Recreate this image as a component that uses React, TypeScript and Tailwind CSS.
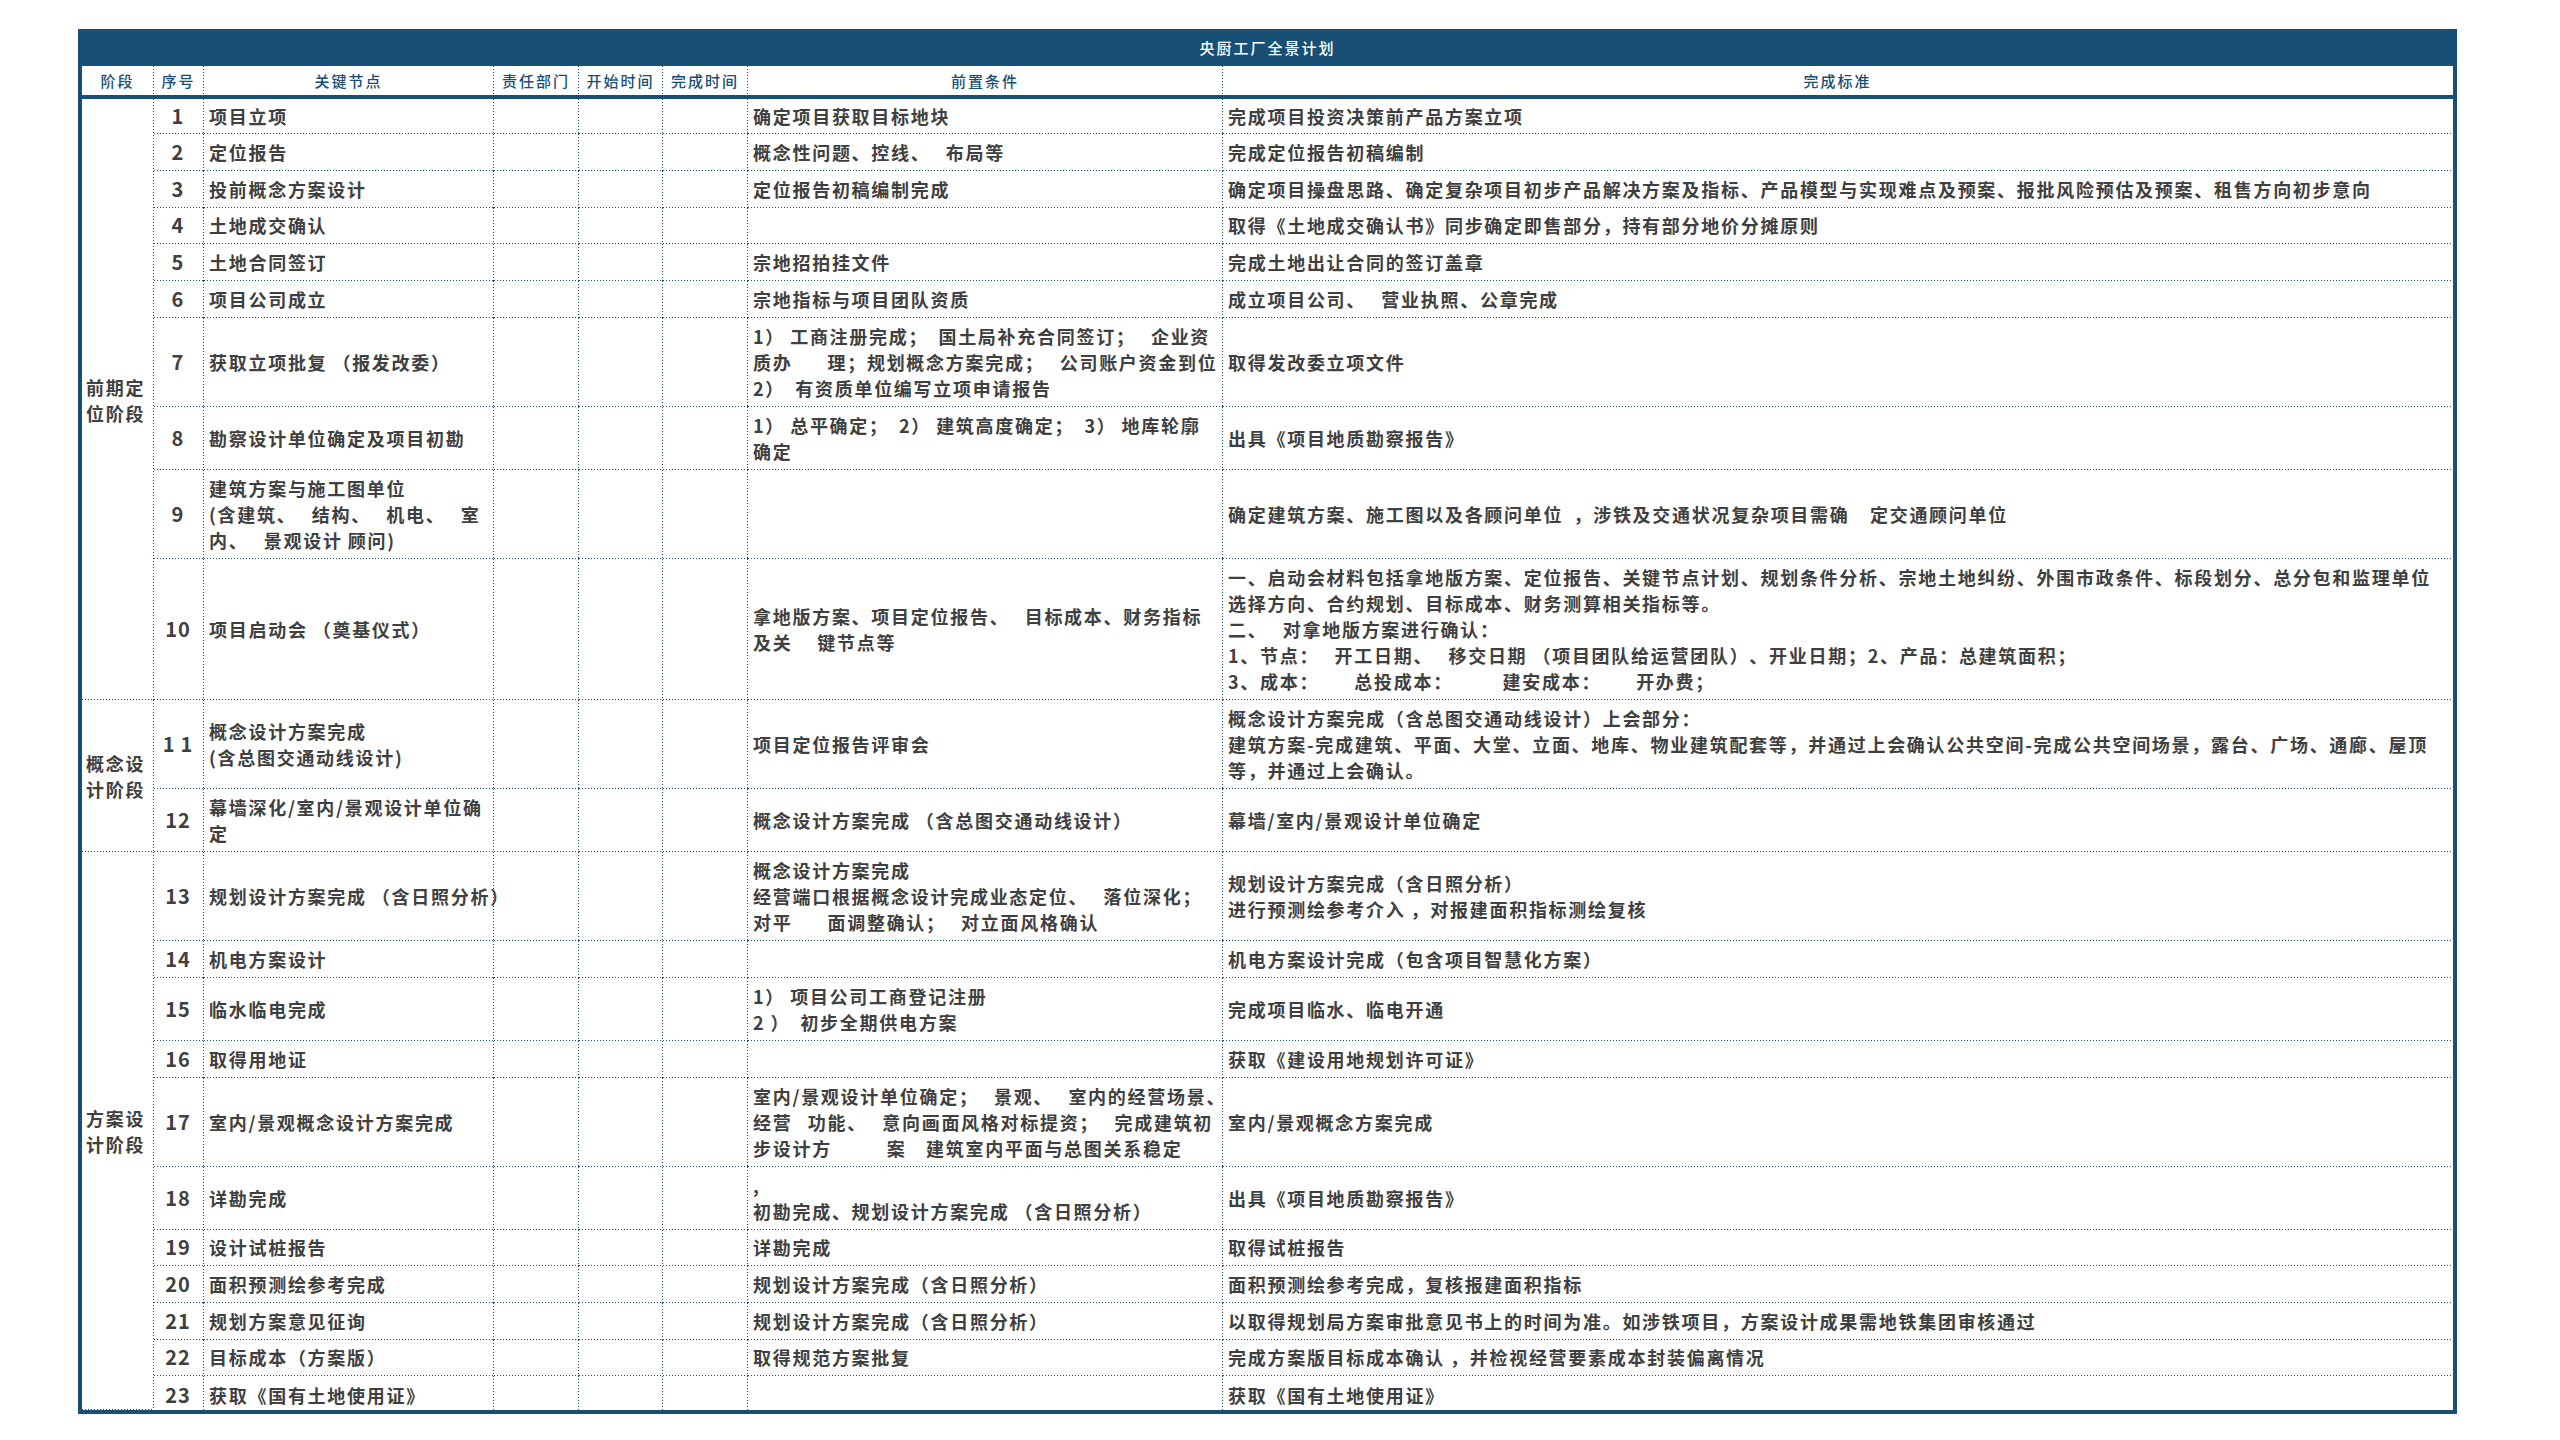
const rows = [
  { h: "h-[35px]", n: "1", node: "项目立项", pre: "确定项目获取目标地块", done: "完成项目投资决策前产品方案立项" },
  { h: "h-[37px]", n: "2", node: "定位报告", pre: "概念性问题、控线、   布局等", done: "完成定位报告初稿编制" },
  { h: "h-[37px]", n: "3", node: "投前概念方案设计", pre: "定位报告初稿编制完成", done: "确定项目操盘思路、确定复杂项目初步产品解决方案及指标、产品模型与实现难点及预案、报批风险预估及预案、租售方向初步意向" },
  { h: "h-[36px]", n: "4", node: "土地成交确认", pre: "", done: "取得《土地成交确认书》同步确定即售部分，持有部分地价分摊原则" },
  { h: "h-[37px]", n: "5", node: "土地合同签订", pre: "宗地招拍挂文件", done: "完成土地出让合同的签订盖章" },
  { h: "h-[37px]", n: "6", node: "项目公司成立", pre: "宗地指标与项目团队资质", done: "成立项目公司、   营业执照、公章完成" },
  { h: "h-[89px]", n: "7", node: "获取立项批复 （报发改委）", pre: "1） 工商注册完成；  国土局补充合同签订；   企业资\n质办\u3000   理；规划概念方案完成；   公司账户资金到位\n2）  有资质单位编写立项申请报告", done: "取得发改委立项文件" },
  { h: "h-[63px]", n: "8", node: "勘察设计单位确定及项目初勘", pre: "1） 总平确定；  2） 建筑高度确定；  3） 地库轮廓\n确定", done: "出具《项目地质勘察报告》" },
  { h: "h-[89px]", n: "9", node: "建筑方案与施工图单位\n(含建筑、   结构、   机电、   室\n内、   景观设计 顾问)", pre: "", done: "确定建筑方案、施工图以及各顾问单位  ，涉铁及交通状况复杂项目需确    定交通顾问单位" },
  { h: "h-[141px]", n: "10", node: "项目启动会 （奠基仪式）", pre: "拿地版方案、项目定位报告、   目标成本、财务指标\n及关\u3000 键节点等", done: "一、启动会材料包括拿地版方案、定位报告、关键节点计划、规划条件分析、宗地土地纠纷、外围市政条件、标段划分、总分包和监理单位\n选择方向、合约规划、目标成本、财务测算相关指标等。\n二、   对拿地版方案进行确认：\n1、节点：   开工日期、   移交日期 （项目团队给运营团队）、开业日期；2、产品：总建筑面积；\n3、成本：\u3000   总投成本：\u3000\u3000  建安成本：\u3000   开办费；" },
  { h: "h-[89px]", n: "1 1", node: "概念设计方案完成\n(含总图交通动线设计)", pre: "项目定位报告评审会", done: "概念设计方案完成（含总图交通动线设计）上会部分：\n建筑方案-完成建筑、平面、大堂、立面、地库、物业建筑配套等，并通过上会确认公共空间-完成公共空间场景，露台、广场、通廊、屋顶\n等，并通过上会确认。" },
  { h: "h-[63px]", n: "12", node: "幕墙深化/室内/景观设计单位确\n定", pre: "概念设计方案完成 （含总图交通动线设计）", done: "幕墙/室内/景观设计单位确定" },
  { h: "h-[89px]", n: "13", node: "规划设计方案完成 （含日照分析）", pre: "概念设计方案完成\n经营端口根据概念设计完成业态定位、   落位深化；\n对平\u3000   面调整确认；   对立面风格确认", done: "规划设计方案完成（含日照分析）\n进行预测绘参考介入 ，对报建面积指标测绘复核" },
  { h: "h-[37px]", n: "14", node: "机电方案设计", pre: "", done: "机电方案设计完成（包含项目智慧化方案）" },
  { h: "h-[63px]", n: "15", node: "临水临电完成", pre: "1） 项目公司工商登记注册\n2 ）  初步全期供电方案", done: "完成项目临水、临电开通" },
  { h: "h-[37px]", n: "16", node: "取得用地证", pre: "", done: "获取《建设用地规划许可证》" },
  { h: "h-[89px]", n: "17", node: "室内/景观概念设计方案完成", pre: "室内/景观设计单位确定；   景观、   室内的经营场景、\n经营   功能、   意向画面风格对标提资；   完成建筑初\n步设计方\u3000\u3000   案\u3000建筑室内平面与总图关系稳定", done: "室内/景观概念方案完成" },
  { h: "h-[63px]", n: "18", node: "详勘完成", pre: ",\n初勘完成、规划设计方案完成 （含日照分析）", done: "出具《项目地质勘察报告》" },
  { h: "h-[36px]", n: "19", node: "设计试桩报告", pre: "详勘完成", done: "取得试桩报告" },
  { h: "h-[37px]", n: "20", node: "面积预测绘参考完成", pre: "规划设计方案完成（含日照分析）", done: "面积预测绘参考完成，复核报建面积指标" },
  { h: "h-[37px]", n: "21", node: "规划方案意见征询", pre: "规划设计方案完成（含日照分析）", done: "以取得规划局方案审批意见书上的时间为准。如涉铁项目，方案设计成果需地铁集团审核通过" },
  { h: "h-[36px]", n: "22", node: "目标成本（方案版）", pre: "取得规范方案批复", done: "完成方案版目标成本确认 ，并检视经营要素成本封装偏离情况" },
  { h: "h-[34px]", n: "23", node: "获取《国有土地使用证》", pre: "", done: "获取《国有土地使用证》" },
];

// 阶段列的合并单元格，key 是该阶段第一行的下标
const stages: Record<number, { span: number; label: string }> = {
  0: { span: 10, label: "前期定\n位阶段" },
  10: { span: 2, label: "概念设\n计阶段" },
  12: { span: 11, label: "方案设\n计阶段" },
};

const heads = ["阶段", "序号", "关键节点", "责任部门", "开始时间", "完成时间", "前置条件", "完成标准"];

// 点线间距是 3px，border-dotted 画不出来，所以用背景画
const dotR =
  "[background-image:linear-gradient(to_bottom,#174f75_1px,transparent_1px)] [background-size:1px_3px] [background-position:right_top] bg-repeat-y";
const dotB =
  "[background-image:linear-gradient(to_right,#174f75_1px,transparent_1px)] [background-size:3px_1px] [background-position:left_bottom] bg-repeat-x";
const dotRB =
  "[background-image:linear-gradient(to_right,#174f75_1px,transparent_1px),linear-gradient(to_bottom,#174f75_1px,transparent_1px)] [background-size:3px_1px,1px_3px] [background-position:left_bottom,right_top] [background-repeat:repeat-x,repeat-y]";

export default function App() {
  return (
    <div className="min-h-screen bg-white pt-[29px] pl-[78px] font-['Noto_Sans_CJK_SC',sans-serif]">
      <div className="w-[2379px] border-x-4 border-b-4 border-[#174f75]">
        <div className="flex h-[37px] items-center justify-center bg-[#174f75] pt-[2px] text-[15px] font-medium tracking-[2px] text-white">
          央厨工厂全景计划
        </div>
        <table className="w-[2371px] table-fixed border-separate border-spacing-0 text-[18px] leading-[26px] font-bold tracking-[1.72px] [word-spacing:-0.7px] [text-spacing-trim:space-all] text-[#404040]">
          <colgroup>
            <col className="w-[72px]" />
            <col className="w-[50px]" />
            <col className="w-[290px]" />
            <col className="w-[85px]" />
            <col className="w-[84px]" />
            <col className="w-[85px]" />
            <col className="w-[475px]" />
            <col className="w-[1230px]" />
          </colgroup>
          <thead>
            <tr className="h-[33px]">
              {heads.map((t, i) => (
                <th
                  key={t}
                  className={`border-b-4 border-b-[#174f75] pr-[1px] text-center text-[15px] leading-[20px] font-medium tracking-[2px] whitespace-nowrap text-[#174f75] ${
                    i < 7 ? dotR : ""
                  }`}
                >
                  {t}
                </th>
              ))}
            </tr>
          </thead>
          <tbody>
            {rows.map((r, i) => {
              const last = i === rows.length - 1;
              const cell = last ? dotR : dotRB;
              // 文字相对行高略偏上，最后一行相反
              const pad = last ? "pt-[3px]" : "pb-[2px]";
              return (
                <tr key={r.n} className={r.h}>
                  {stages[i] && (
                    <td
                      rowSpan={stages[i].span}
                      className={`pl-[4px] whitespace-pre ${cell}`}
                    >
                      {stages[i].label}
                    </td>
                  )}
                  <td className={`pr-[2px] text-center text-[20px] tracking-[1px] whitespace-pre ${pad} ${cell}`}>{r.n}</td>
                  <td className={`pl-[5px] whitespace-pre ${pad} ${cell}`}>{r.node}</td>
                  <td className={cell} />
                  <td className={cell} />
                  <td className={cell} />
                  <td className={`pl-[5px] whitespace-pre ${pad} ${cell}`}>{r.pre}</td>
                  <td className={`pl-[5px] whitespace-pre ${pad} ${last ? "" : dotB}`}>{r.done}</td>
                </tr>
              );
            })}
          </tbody>
        </table>
      </div>
    </div>
  );
}
